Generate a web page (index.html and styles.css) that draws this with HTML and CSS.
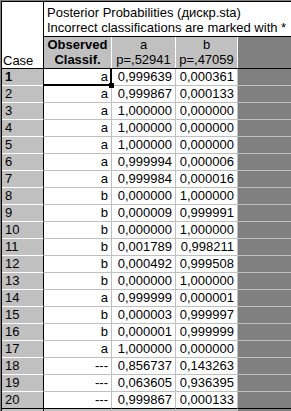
FILE: index.html
```html
<!DOCTYPE html>
<html>
<head>
<meta charset="utf-8">
<link rel="stylesheet" href="styles.css">
</head>
<body>
<div class="sheet">
  <div class="inner">
    <div class="head">
      <div class="case-head">Case</div>
      <div class="head-right">
        <div class="title">
          <div>Posterior Probabilities (дискр.sta)</div>
          <div>Incorrect classifications are marked with *</div>
        </div>
        <div class="colheads">
          <div class="ch ch-obs bold"><div>Observed</div><div>Classif.</div></div>
          <div class="ch ch-a"><div>a</div><div>p=,52941</div></div>
          <div class="ch ch-b"><div>b</div><div>p=,47059</div></div>
          <div class="ch-rest"></div>
        </div>
      </div>
    </div>
    <div class="rows">
      <div class="row"><div class="c-case bold">1</div><div class="c-obs">a</div><div class="c-a">0,999639</div><div class="c-b">0,000361</div><div class="c-rest"></div></div>
      <div class="row"><div class="c-case">2</div><div class="c-obs">a</div><div class="c-a">0,999867</div><div class="c-b">0,000133</div><div class="c-rest"></div></div>
      <div class="row"><div class="c-case">3</div><div class="c-obs">a</div><div class="c-a">1,000000</div><div class="c-b">0,000000</div><div class="c-rest"></div></div>
      <div class="row"><div class="c-case">4</div><div class="c-obs">a</div><div class="c-a">1,000000</div><div class="c-b">0,000000</div><div class="c-rest"></div></div>
      <div class="row"><div class="c-case">5</div><div class="c-obs">a</div><div class="c-a">1,000000</div><div class="c-b">0,000000</div><div class="c-rest"></div></div>
      <div class="row"><div class="c-case">6</div><div class="c-obs">a</div><div class="c-a">0,999994</div><div class="c-b">0,000006</div><div class="c-rest"></div></div>
      <div class="row"><div class="c-case">7</div><div class="c-obs">a</div><div class="c-a">0,999984</div><div class="c-b">0,000016</div><div class="c-rest"></div></div>
      <div class="row"><div class="c-case">8</div><div class="c-obs">b</div><div class="c-a">0,000000</div><div class="c-b">1,000000</div><div class="c-rest"></div></div>
      <div class="row"><div class="c-case">9</div><div class="c-obs">b</div><div class="c-a">0,000009</div><div class="c-b">0,999991</div><div class="c-rest"></div></div>
      <div class="row"><div class="c-case">10</div><div class="c-obs">b</div><div class="c-a">0,000000</div><div class="c-b">1,000000</div><div class="c-rest"></div></div>
      <div class="row"><div class="c-case">11</div><div class="c-obs">b</div><div class="c-a">0,001789</div><div class="c-b">0,998211</div><div class="c-rest"></div></div>
      <div class="row"><div class="c-case">12</div><div class="c-obs">b</div><div class="c-a">0,000492</div><div class="c-b">0,999508</div><div class="c-rest"></div></div>
      <div class="row"><div class="c-case">13</div><div class="c-obs">b</div><div class="c-a">0,000000</div><div class="c-b">1,000000</div><div class="c-rest"></div></div>
      <div class="row"><div class="c-case">14</div><div class="c-obs">a</div><div class="c-a">0,999999</div><div class="c-b">0,000001</div><div class="c-rest"></div></div>
      <div class="row"><div class="c-case">15</div><div class="c-obs">b</div><div class="c-a">0,000003</div><div class="c-b">0,999997</div><div class="c-rest"></div></div>
      <div class="row"><div class="c-case">16</div><div class="c-obs">b</div><div class="c-a">0,000001</div><div class="c-b">0,999999</div><div class="c-rest"></div></div>
      <div class="row"><div class="c-case">17</div><div class="c-obs">a</div><div class="c-a">1,000000</div><div class="c-b">0,000000</div><div class="c-rest"></div></div>
      <div class="row"><div class="c-case">18</div><div class="c-obs">---</div><div class="c-a">0,856737</div><div class="c-b">0,143263</div><div class="c-rest"></div></div>
      <div class="row"><div class="c-case">19</div><div class="c-obs">---</div><div class="c-a">0,063605</div><div class="c-b">0,936395</div><div class="c-rest"></div></div>
      <div class="row last"><div class="c-case">20</div><div class="c-obs">---</div><div class="c-a">0,999867</div><div class="c-b">0,000133</div><div class="c-rest"></div></div>
      <div class="row tail"><div class="c-case"></div><div class="c-obs"></div><div class="c-a"></div><div class="c-b"></div><div class="c-rest"></div></div>
    </div>
    <div class="cursor"><div class="handle"></div></div>
  </div>
</div>
</body>
</html>
```

FILE: styles.css
```css
html, body {
  margin: 0;
  padding: 0;
  background: #808080;
}
body {
  width: 291px;
  height: 411px;
  overflow: hidden;
  font-family: "Liberation Sans", Arial, sans-serif;
  font-size: 13px;
  color: #000;
}
.bold { font-weight: bold; }
.sheet {
  width: 291px;
  height: 411px;
  box-sizing: border-box;
  border-left: 1px solid #808080;
  border-top: 1px solid #808080;
  overflow: hidden;
}
.inner {
  position: relative;
  box-sizing: border-box;
  height: 100%;
  border-left: 1px solid #000;
  border-top: 1px solid #000;
  background: #808080;
}
.head {
  display: flex;
  height: 66px;
  border-bottom: 1px solid #000;
}
.case-head {
  width: 40px;
  padding-left: 1px;
  background: #fff;
  border-right: 1px solid #000;
  display: flex;
  flex-direction: column;
  justify-content: flex-end;
  line-height: 15px;
}
.head-right {
  flex: 1;
  display: flex;
  flex-direction: column;
}
.title {
  height: 31px;
  padding: 3px 0 0 3px;
  background: #fff;
  border-bottom: 1px solid #000;
  line-height: 15px;
  white-space: nowrap;
}
.colheads {
  flex: 1;
  display: flex;
  background: #808080;
  line-height: 15px;
}
.ch {
  background: #c0c0c0;
  border-right: 1px solid #fff;
  text-align: center;
}
.ch-obs { width: 67px; }
.ch-a { width: 63px; }
.ch-b { width: 61px; }
.ch-rest { flex: 1; }
.row {
  display: flex;
  height: 17px;
  line-height: 16px;
}
.row > div {
  box-sizing: border-box;
  height: 17px;
  border-bottom: 1px solid #c0c0c0;
  white-space: nowrap;
}
.c-case {
  width: 42px;
  padding-left: 3px;
  background: #c0c0c0;
  border-right: 1px solid #000;
  border-bottom-color: #fff !important;
}
.c-obs {
  width: 68px;
  text-align: right;
  padding-right: 3px;
  background: #fff;
  border-right: 1px solid #c0c0c0;
}
.c-a {
  width: 64px;
  text-align: right;
  padding-right: 3px;
  background: #fff;
  border-right: 1px solid #c0c0c0;
}
.c-b {
  width: 62px;
  text-align: right;
  padding-right: 3px;
  background: #fff;
  border-right: 1px solid #c0c0c0;
}
.c-rest {
  flex: 1;
  background: #808080;
}
.row.last > div {
  border-bottom-color: #000 !important;
}
.row.tail > div {
  background: #c0c0c0;
  border-bottom: none;
}
.row.tail .c-rest { background: #808080; }
.cursor {
  position: absolute;
  left: 41px;
  top: 66px;
  width: 67px;
  height: 16px;
  border-right: 2px solid #000;
  border-bottom: 2px solid #000;
  pointer-events: none;
}
.handle {
  position: absolute;
  right: -4px;
  bottom: -4px;
  width: 5px;
  height: 5px;
  background: #000;
}
```
